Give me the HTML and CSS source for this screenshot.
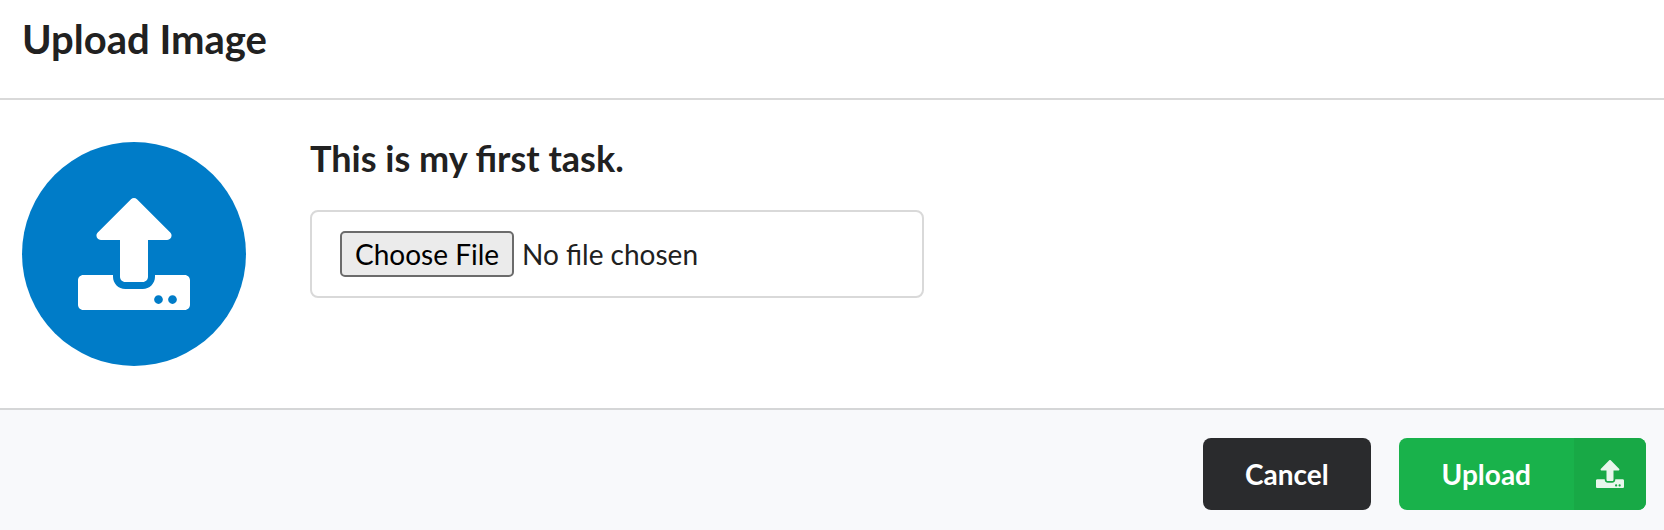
FILE: index.html
```html
<!DOCTYPE html>
<html lang="en">
<head>
<meta charset="utf-8">
<meta name="viewport" content="width=device-width, initial-scale=1">
<title>Upload Image</title>
<link rel="stylesheet" href="styles.css">
</head>
<body>
<svg class="sprite" aria-hidden="true">
  <symbol id="icon-upload" viewBox="0 0 512 512">
    <path d="M296 384h-80c-13.300 0-24-10.700-24-24V192h-87.700c-17.800 0-26.700-21.500-14.100-34.100L242.300 5.700c7.500-7.500 19.800-7.500 27.300 0l152.200 152.200c12.600 12.600 3.700 34.100-14.100 34.100H320v168c0 13.300-10.700 24-24 24zm216-8v112c0 13.300-10.700 24-24 24H24c-13.300 0-24-10.700-24-24V376c0-13.300 10.700-24 24-24h136v8c0 30.900 25.100 56 56 56h80c30.900 0 56-25.100 56-56v-8h136c13.300 0 24 10.700 24 24zm-124 88c0-11-9-20-20-20s-20 9-20 20 9 20 20 20 20-9 20-20zm64 0c0-11-9-20-20-20s-20 9-20 20 9 20 20 20 20-9 20-20z"/>
  </symbol>
</svg>
<form class="modal">
  <header class="modal-header">
    <h1 class="modal-title">Upload Image</h1>
  </header>
  <main class="modal-content">
    <div class="badge"><svg class="badge-icon" aria-hidden="true"><use href="#icon-upload"/></svg></div>
    <div class="description">
      <label class="task-title" for="image-file">This is my first task.</label>
      <input class="file-input" id="image-file" type="file">
    </div>
  </main>
  <footer class="modal-actions">
    <button class="button button-cancel" type="button">Cancel</button>
    <button class="button button-upload" type="submit">
      <span class="button-label">Upload</span>
      <span class="button-icon"><svg class="upload-icon" aria-hidden="true"><use href="#icon-upload"/></svg></span>
    </button>
  </footer>
</form>
</body>
</html>
```
FILE: styles.css
```css
* {
  box-sizing: border-box;
}

body {
  margin: 0;
  background: #fff;
  color: #212121;
  font-family: Lato, "Open Sans", sans-serif;
  font-size: 28px;
}

.sprite {
  display: none;
}

.modal {
  display: flex;
  flex-direction: column;
  min-height: 100vh;
}

.modal-header {
  padding: 13px 22px 33px;
  border-bottom: 2px solid #d9d9d9;
}

.modal-title {
  margin: 0;
  font-size: 40px;
  line-height: 52px;
  font-weight: 700;
}

.modal-content {
  display: flex;
  align-items: flex-start;
  gap: 64px;
  padding: 42px 22px;
}

.badge {
  display: flex;
  flex: none;
  align-items: center;
  justify-content: center;
  width: 224px;
  height: 224px;
  border-radius: 50%;
  background: #007cc8;
}

.badge-icon {
  width: 112px;
  height: 112px;
  fill: #fff;
}

.description {
  display: flex;
  flex: 1;
  flex-direction: column;
  gap: 36px;
  min-width: 0;
}

.task-title {
  font-size: 36px;
  line-height: 32px;
  font-weight: 700;
}

.file-input {
  width: 100%;
  max-width: 614px;
  padding: 19px 28px;
  border: 2px solid #d9d9d9;
  border-radius: 8px;
  background: #fff;
  color: #212121;
  font: inherit;
  line-height: 34px;
}

.file-input::file-selector-button {
  height: 46px;
  margin: 0 8px 0 0;
  padding: 0 13px;
  border: 2px solid #6b6b6b;
  border-radius: 5px;
  background: #ebebeb;
  color: #000;
  font: inherit;
}

.modal-actions {
  display: flex;
  flex: 1;
  align-items: flex-start;
  justify-content: flex-end;
  gap: 28px;
  padding: 28px 18px 18px;
  border-top: 2px solid #d5d6d7;
  background: #f8f9fb;
}

.button {
  padding: 0;
  border: 0;
  border-radius: 8px;
  color: #fff;
  font: inherit;
  font-weight: 700;
  line-height: 72px;
  cursor: pointer;
}

.button-cancel {
  padding: 0 42px;
  background: #2a2b2d;
}

.button-upload {
  display: flex;
  overflow: hidden;
  background: #19b24b;
}

.button-label {
  padding: 0 43px;
}

.button-icon {
  display: flex;
  align-items: center;
  justify-content: center;
  width: 72px;
  height: 72px;
  background: #18a946;
}

.upload-icon {
  width: 28px;
  height: 28px;
  fill: #e8f6ec;
}
```
